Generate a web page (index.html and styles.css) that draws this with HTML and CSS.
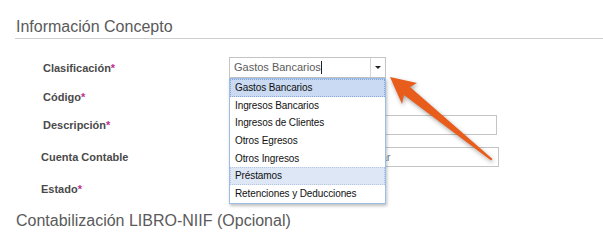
FILE: index.html
```html
<!DOCTYPE html>
<html>
	<head>
		<meta charset="UTF-8">
		<title>Concepto</title>
		<link rel="stylesheet" href="styles.css">
	</head>
	<body>
		<div id="page">
			<h2 class="section-title line">Información Concepto</h2>

			<div class="form">
				<div class="row row-first">
					<label class="lbl">Clasificación<span class="req">*</span></label>
					<div class="combo">
						<div class="combo-input">Gastos Bancarios<span class="caret"></span></div>
						<div class="combo-btn"><span class="tri"></span></div>
						<ul class="combo-list">
							<li class="sel">Gastos Bancarios</li>
							<li>Ingresos Bancarios</li>
							<li>Ingresos de Clientes</li>
							<li>Otros Egresos</li>
							<li>Otros Ingresos</li>
							<li class="hover">Préstamos</li>
							<li>Retenciones y Deducciones</li>
						</ul>
					</div>
				</div>
				<div class="row row-2">
					<label class="lbl">Código<span class="req">*</span></label>
					<div class="field short"></div>
				</div>
				<div class="row row-3">
					<label class="lbl">Descripción<span class="req">*</span></label>
					<div class="field"></div>
				</div>
				<div class="row row-4">
					<label class="lbl lbl-b">Cuenta Contable</label>
					<div class="field wide"><span class="ph">Escriba el nombre para buscar</span></div>
				</div>
				<div class="row row-5">
					<label class="lbl lbl-b">Estado<span class="req">*</span></label>
					<div class="field short"></div>
				</div>
			</div>

			<h2 class="section-title second">Contabilización LIBRO-NIIF (Opcional)</h2>

			<svg class="pointer" width="603" height="251" viewBox="0 0 603 251">
				<polygon points="390,77 417,83 410,87 492.5,159 491,160.5 404,95 402,104" fill="#e85c1c"/>
			</svg>
		</div>
	</body>
</html>
```

FILE: styles.css
```css
* {
	margin: 0;
	padding: 0;
	box-sizing: border-box;
}
ul,li {
	list-style: none;
}
body {
	background: #fff;
	font-family: "Liberation Sans", Arial, sans-serif;
	color: #555;
}
#page {
	position: relative;
	width: 603px;
	height: 251px;
	overflow: hidden;
}
.section-title {
	font-weight: normal;
	font-size: 16px;
	color: #5a5a5a;
	margin-left: 15px;
	padding-left: 1px;
	line-height: 20px;
}
.line {
	padding-top: 17px;
	padding-bottom: 1px;
	border-bottom: 1px solid #cfcfcf;
}
.second {
	margin-top: 12px;
}

.row {
	display: flex;
	align-items: center;
	height: 20px;
	margin-top: 8px;
}
.row-first {
	margin-top: 18px;
	height: 21px;
}
.row-2 { margin-top: 9px; }
.row-4 { margin-top: 12px; }
.row-5 { margin-top: 12px; }

.lbl {
	width: 229px;
	padding-left: 43px;
	font-size: 11px;
	font-weight: bold;
	color: #4a4a4a;
}
.lbl-b {
	padding-left: 41px;
}
.req {
	color: #c0308a;
}

.field {
	width: 268px;
	height: 20px;
	border: 1px solid #c4c4c4;
	background: #fff;
	font-size: 11.5px;
	line-height: 18px;
	padding-left: 4px;
	white-space: nowrap;
	overflow: hidden;
}
.field.wide {
	width: 270px;
}
.field.short {
	width: 140px;
}
.ph {
	color: #7a7f99;
}

.combo {
	position: relative;
	display: flex;
	width: 157px;
	height: 21px;
	border: 1px solid #c4c4c4;
}
.combo-input {
	flex: 1;
	font-size: 11px;
	line-height: 19px;
	padding-left: 4px;
	color: #5b5b5b;
}
.caret {
	display: inline-block;
	width: 1px;
	height: 13px;
	background: #222;
	vertical-align: -3px;
}
.combo-btn {
	width: 15px;
	border-left: 1px solid #d6d6d6;
	display: flex;
	align-items: center;
	justify-content: center;
}
.tri {
	width: 0;
	height: 0;
	border-left: 3px solid transparent;
	border-right: 3px solid transparent;
	border-top: 3px solid #222;
}
.combo-list {
	position: absolute;
	left: -1px;
	top: 20px;
	width: 157px;
	background: #fff;
	border: 1px solid #9dbde9;
	box-shadow: 1px 2px 3px rgba(0, 0, 0, 0.25);
	z-index: 2;
}
.combo-list li {
	height: 17.7px;
	line-height: 16px;
	font-size: 10px;
	letter-spacing: -0.1px;
	color: #111;
	padding-left: 4px;
	border: 1px solid transparent;
}
.combo-list li.sel {
	background: #c9daf2;
	border: 1px dotted #8aa6d4;
}
.combo-list li.hover {
	background: #dde7f6;
	border: 1px dotted #b4c6e4;
}

.pointer {
	position: absolute;
	left: 0;
	top: 0;
	z-index: 3;
	pointer-events: none;
	filter: drop-shadow(1px 2px 2px rgba(0, 0, 0, 0.35));
}
```
